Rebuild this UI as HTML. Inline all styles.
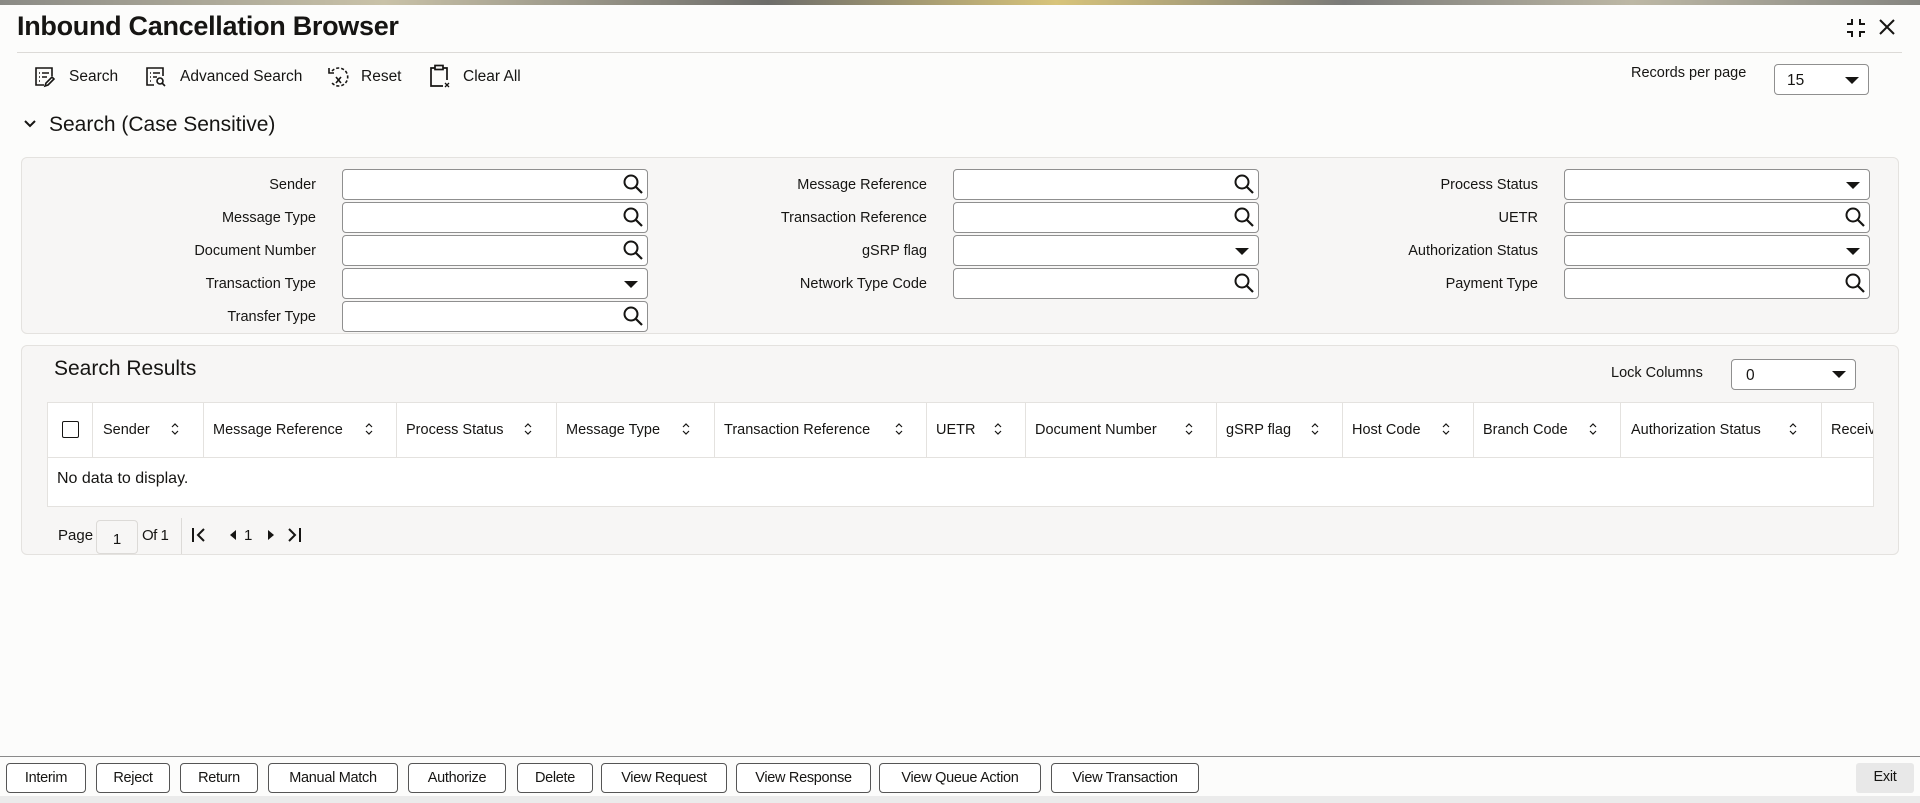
<!DOCTYPE html>
<html><head><meta charset="utf-8"><style>
*{box-sizing:border-box;margin:0;padding:0}
body{width:1920px;height:803px;position:relative;overflow:hidden;background:#fcfcfb;font-family:"Liberation Sans",sans-serif;color:#161513}
.a{position:absolute}
.band{left:0;top:0;width:1920px;height:5px;background:linear-gradient(90deg,#8a8a85,#c9c2a8 20%,#6d6d6a 40%,#d8c47a 55%,#7a7a78 70%,#bdb8a5 85%,#858580)}
.lbl{font-size:14.5px;text-align:right;width:300px;line-height:18px}
.inp{height:31px;background:#fff;border:1px solid #8f8f8f;border-radius:4px}
.panel{background:#f7f6f5;border:1px solid #e4e2df;border-radius:6px}
.tb{font-size:15.5px;top:68px;line-height:18px}
.th{font-size:14.5px;top:421px;line-height:18px}
.vl{top:402px;width:1px;height:55px;background:#e4e2df}
.btn{top:763px;height:30px;border:1px solid #555;border-radius:4px;background:#fff;font-size:14.5px;line-height:28px;text-align:center;letter-spacing:-0.3px}
</style></head><body>
<div class="a band"></div>
<div class="a" style="left:17px;top:11px;font-size:27px;font-weight:bold;letter-spacing:-0.3px">Inbound Cancellation Browser</div>
<svg class="a" style="left:1845px;top:17px" width="22" height="22" viewBox="0 0 22 22" fill="none" stroke="#161513" stroke-width="2"><path d="M7 2v5H2M15 2v5h5M7 20v-5H2M15 20v-5h5"/></svg>
<svg class="a" style="left:1878px;top:18px" width="18" height="18" viewBox="0 0 18 18" stroke="#161513" stroke-width="2"><path d="M2 2l14 14M16 2L2 16"/></svg>
<div class="a" style="left:17px;top:52px;width:1885px;height:1px;background:#dcdad7"></div>

<svg class="a" style="left:34px;top:66px" width="22" height="22" viewBox="0 0 22 22" fill="none" stroke="#161513" stroke-width="1.6"><path d="M10 19H2V2h16v8"/><path d="M5 7h1M8 7h7M5 11h1M8 11h5M5 15h1"/><path d="M11 20l1-3 6-6 2 2-6 6z"/></svg>
<div class="a tb" style="left:69px">Search</div>
<svg class="a" style="left:145px;top:66px" width="22" height="22" viewBox="0 0 22 22" fill="none" stroke="#161513" stroke-width="1.6"><path d="M9 19H2V2h16v8"/><path d="M5 7h1M8 7h7M5 11h1M8 11h4M5 15h1"/><circle cx="15" cy="15" r="3"/><path d="M17 17l3 3"/></svg>
<div class="a tb" style="left:180px">Advanced Search</div>
<svg class="a" style="left:326px;top:65px" width="26" height="24" viewBox="0 0 26 24" fill="none" stroke="#161513" stroke-width="1.6"><path d="M6 6a9 9 0 1 1 0 12" stroke-dasharray="3 2"/><path d="M3 3v5h5"/><path d="M10 12l5 6M15 12l-5 6"/></svg>
<div class="a tb" style="left:361px">Reset</div>
<svg class="a" style="left:429px;top:64px" width="22" height="25" viewBox="0 0 22 25" fill="none" stroke="#161513" stroke-width="1.7"><path d="M14 22H2V4h4M14 4h4v12"/><rect x="6" y="1.5" width="8" height="4"/><path d="M16 19l4 4M20 19l-4 4" stroke-width="1.3"/></svg>
<div class="a tb" style="left:463px">Clear All</div>

<div class="a" style="left:1631px;top:65px;font-size:14.5px">Records per page</div>
<div class="a inp" style="left:1774px;top:64px;width:95px;height:31px;font-size:15.5px;padding:7px 12px">15</div>
<div class="a" style="left:1845px;top:77px;border-left:7px solid transparent;border-right:7px solid transparent;border-top:7px solid #161513"></div>

<svg class="a" style="left:23px;top:119px" width="14" height="10" viewBox="0 0 14 10" fill="none" stroke="#161513" stroke-width="2"><path d="M2 2l5 5 5-5"/></svg>
<div class="a" style="left:49px;top:113px;font-size:21px">Search (Case Sensitive)</div>

<div class="a panel" style="left:21px;top:157px;width:1878px;height:177px"></div>
<!-- col1 -->
<div class="a lbl" style="left:16px;top:176px">Sender</div>
<div class="a lbl" style="left:16px;top:209px">Message Type</div>
<div class="a lbl" style="left:16px;top:242px">Document Number</div>
<div class="a lbl" style="left:16px;top:275px">Transaction Type</div>
<div class="a lbl" style="left:16px;top:308px">Transfer Type</div>
<div class="a lbl" style="left:627px;top:176px">Message Reference</div>
<div class="a lbl" style="left:627px;top:209px">Transaction Reference</div>
<div class="a lbl" style="left:627px;top:242px">gSRP flag</div>
<div class="a lbl" style="left:627px;top:275px">Network Type Code</div>
<div class="a lbl" style="left:1238px;top:176px">Process Status</div>
<div class="a lbl" style="left:1238px;top:209px">UETR</div>
<div class="a lbl" style="left:1238px;top:242px">Authorization Status</div>
<div class="a lbl" style="left:1238px;top:275px">Payment Type</div>

<div class="a inp" style="left:342px;top:169px;width:306px"></div>
<div class="a inp" style="left:342px;top:202px;width:306px"></div>
<div class="a inp" style="left:342px;top:235px;width:306px"></div>
<div class="a inp" style="left:342px;top:268px;width:306px"></div>
<div class="a inp" style="left:342px;top:301px;width:306px"></div>
<div class="a inp" style="left:953px;top:169px;width:306px"></div>
<div class="a inp" style="left:953px;top:202px;width:306px"></div>
<div class="a inp" style="left:953px;top:235px;width:306px"></div>
<div class="a inp" style="left:953px;top:268px;width:306px"></div>
<div class="a inp" style="left:1564px;top:169px;width:306px"></div>
<div class="a inp" style="left:1564px;top:202px;width:306px"></div>
<div class="a inp" style="left:1564px;top:235px;width:306px"></div>
<div class="a inp" style="left:1564px;top:268px;width:306px"></div>

<svg width="0" height="0" style="position:absolute"><defs><symbol id="mg" viewBox="0 0 22 22"><circle cx="9" cy="9" r="6.5" fill="none" stroke="#161513" stroke-width="2"/><path d="M14 14l6 6" stroke="#161513" stroke-width="2.2"/></symbol></defs></svg>
<svg class="a" style="left:622px;top:173px" width="22" height="22"><use href="#mg"/></svg>
<svg class="a" style="left:622px;top:206px" width="22" height="22"><use href="#mg"/></svg>
<svg class="a" style="left:622px;top:239px" width="22" height="22"><use href="#mg"/></svg>
<svg class="a" style="left:622px;top:305px" width="22" height="22"><use href="#mg"/></svg>
<svg class="a" style="left:1233px;top:173px" width="22" height="22"><use href="#mg"/></svg>
<svg class="a" style="left:1233px;top:206px" width="22" height="22"><use href="#mg"/></svg>
<svg class="a" style="left:1233px;top:272px" width="22" height="22"><use href="#mg"/></svg>
<svg class="a" style="left:1844px;top:206px" width="22" height="22"><use href="#mg"/></svg>
<svg class="a" style="left:1844px;top:272px" width="22" height="22"><use href="#mg"/></svg>
<div class="a" style="left:624px;top:281px;border-left:7px solid transparent;border-right:7px solid transparent;border-top:7px solid #161513"></div>
<div class="a" style="left:1235px;top:248px;border-left:7px solid transparent;border-right:7px solid transparent;border-top:7px solid #161513"></div>
<div class="a" style="left:1846px;top:182px;border-left:7px solid transparent;border-right:7px solid transparent;border-top:7px solid #161513"></div>
<div class="a" style="left:1846px;top:248px;border-left:7px solid transparent;border-right:7px solid transparent;border-top:7px solid #161513"></div>

<div class="a panel" style="left:21px;top:345px;width:1878px;height:210px"></div>
<div class="a" style="left:54px;top:357px;font-size:21px">Search Results</div>
<div class="a" style="left:1611px;top:365px;font-size:14.5px">Lock Columns</div>
<div class="a inp" style="left:1731px;top:359px;width:125px;height:31px;font-size:15.5px;padding:7px 14px">0</div>
<div class="a" style="left:1832px;top:371px;border-left:7px solid transparent;border-right:7px solid transparent;border-top:7px solid #161513"></div>

<div class="a" style="left:47px;top:402px;width:1827px;height:105px;background:#fff;border:1px solid #e4e2df"></div>
<div class="a" style="left:47px;top:457px;width:1827px;height:1px;background:#e4e2df"></div>
<div class="a" style="left:62px;top:421px;width:17px;height:17px;border:1.5px solid #161513;border-radius:2px;background:#fff"></div>
<div class="a vl" style="left:92px"></div><div class="a vl" style="left:203px"></div><div class="a vl" style="left:396px"></div><div class="a vl" style="left:556px"></div><div class="a vl" style="left:714px"></div><div class="a vl" style="left:926px"></div><div class="a vl" style="left:1025px"></div><div class="a vl" style="left:1216px"></div><div class="a vl" style="left:1342px"></div><div class="a vl" style="left:1473px"></div><div class="a vl" style="left:1620px"></div><div class="a vl" style="left:1821px"></div>
<div class="a th" style="left:103px">Sender</div>
<div class="a th" style="left:213px">Message Reference</div>
<div class="a th" style="left:406px">Process Status</div>
<div class="a th" style="left:566px">Message Type</div>
<div class="a th" style="left:724px">Transaction Reference</div>
<div class="a th" style="left:936px">UETR</div>
<div class="a th" style="left:1035px">Document Number</div>
<div class="a th" style="left:1226px">gSRP flag</div>
<div class="a th" style="left:1352px">Host Code</div>
<div class="a th" style="left:1483px">Branch Code</div>
<div class="a th" style="left:1631px">Authorization Status</div>
<div class="a th" style="left:1831px;width:42px;overflow:hidden;white-space:nowrap">Receiver</div>
<svg width="0" height="0" style="position:absolute"><defs><symbol id="so" viewBox="0 0 10 14"><path d="M2 5l3-3 3 3M2 9l3 3 3-3" fill="none" stroke="#161513" stroke-width="1.2"/></symbol></defs></svg>
<svg class="a" style="left:170px;top:422px" width="10" height="14"><use href="#so"/></svg>
<svg class="a" style="left:364px;top:422px" width="10" height="14"><use href="#so"/></svg>
<svg class="a" style="left:523px;top:422px" width="10" height="14"><use href="#so"/></svg>
<svg class="a" style="left:681px;top:422px" width="10" height="14"><use href="#so"/></svg>
<svg class="a" style="left:894px;top:422px" width="10" height="14"><use href="#so"/></svg>
<svg class="a" style="left:993px;top:422px" width="10" height="14"><use href="#so"/></svg>
<svg class="a" style="left:1184px;top:422px" width="10" height="14"><use href="#so"/></svg>
<svg class="a" style="left:1310px;top:422px" width="10" height="14"><use href="#so"/></svg>
<svg class="a" style="left:1441px;top:422px" width="10" height="14"><use href="#so"/></svg>
<svg class="a" style="left:1588px;top:422px" width="10" height="14"><use href="#so"/></svg>
<svg class="a" style="left:1788px;top:422px" width="10" height="14"><use href="#so"/></svg>
<div class="a" style="left:57px;top:470px;font-size:16px">No data to display.</div>

<div class="a" style="left:58px;top:527px;font-size:15px">Page</div>
<div class="a" style="left:96px;top:520px;width:42px;height:34px;border:1px solid #dcdad7;border-radius:4px;background:#f7f6f5;font-size:15px;text-align:center;padding-top:10px">1</div>
<div class="a" style="left:142px;top:527px;font-size:15px;letter-spacing:-0.5px">Of 1</div>
<div class="a" style="left:181px;top:518px;width:1px;height:36px;background:#dcdad7"></div>
<svg class="a" style="left:190px;top:526px" width="120" height="18" viewBox="0 0 120 18" fill="#161513" stroke="#161513"><path d="M3 2v14" stroke-width="2"/><path d="M14 3L8 9l6 6" fill="none" stroke-width="2"/><path d="M46 4l-6 5 6 5z" stroke="none"/><path d="M78 4l6 5-6 5z" stroke="none"/><path d="M99 3l6 6-6 6" fill="none" stroke-width="2"/><path d="M110 2v14" stroke-width="2"/></svg>
<div class="a" style="left:244px;top:527px;font-size:15px">1</div>

<div class="a" style="left:0;top:756px;width:1920px;height:1px;background:#8a8a8a"></div>
<div class="a btn" style="left:6px;width:80px">Interim</div>
<div class="a btn" style="left:96px;width:74px">Reject</div>
<div class="a btn" style="left:180px;width:78px">Return</div>
<div class="a btn" style="left:268px;width:130px">Manual Match</div>
<div class="a btn" style="left:408px;width:98px">Authorize</div>
<div class="a btn" style="left:517px;width:76px">Delete</div>
<div class="a btn" style="left:601px;width:126px">View Request</div>
<div class="a btn" style="left:736px;width:135px">View Response</div>
<div class="a btn" style="left:879px;width:162px">View Queue Action</div>
<div class="a btn" style="left:1051px;width:148px">View Transaction</div>
<div class="a btn" style="left:1856px;width:58px;border:none;background:#e8e8e8;border-radius:3px">Exit</div>
<div class="a" style="left:0;top:796px;width:1920px;height:7px;background:#ebebeb"></div>
</body></html>
